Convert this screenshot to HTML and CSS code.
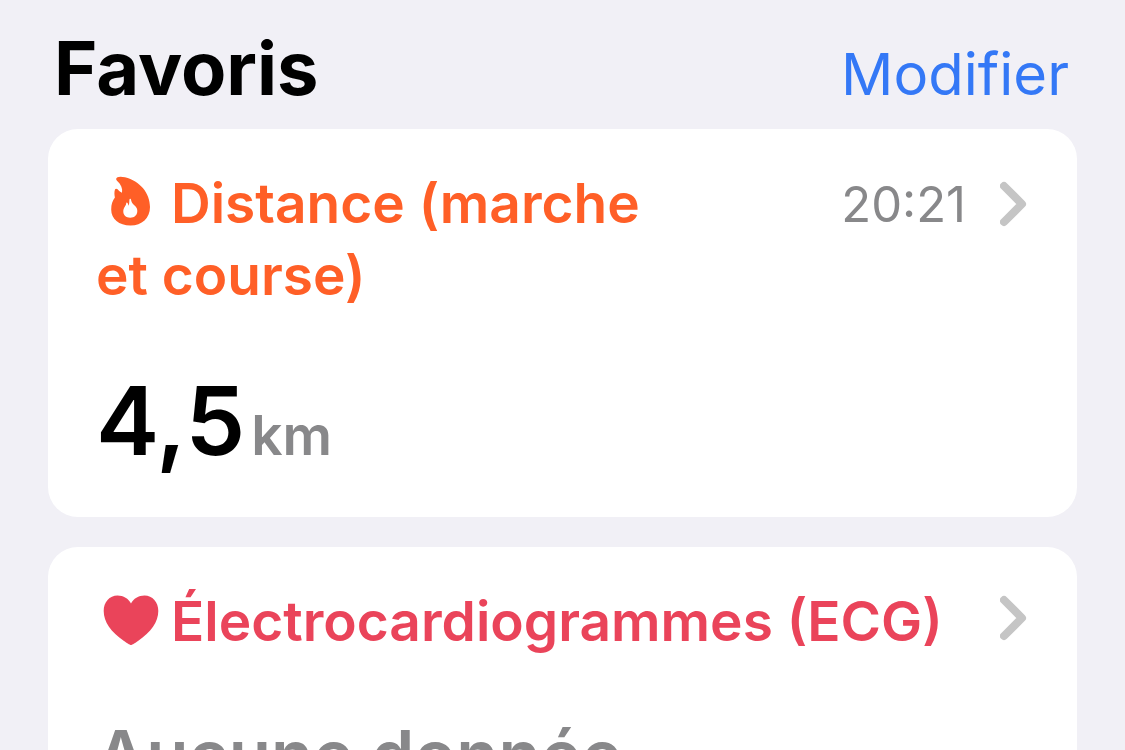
FILE: index.html
```html
<!DOCTYPE html>
<html lang="fr">
<head>
<meta charset="utf-8">
<meta name="viewport" content="width=device-width, initial-scale=1">
<title>Favoris</title>
<link rel="stylesheet" href="styles.css">
</head>
<body>
<main class="page">
  <header class="header">
    <h1 class="title">Favoris</h1>
    <button class="edit" type="button">Modifier</button>
  </header>
  <section class="card">
    <div class="card-head">
      <h2 class="card-title move"><svg class="icon" viewBox="0 0 66 56" aria-hidden="true"><path fill="currentColor" fill-rule="evenodd" d="M21.5 3.200C23 2.400 26 2.500 29 3.200C44 7 54 19 54 33C54 44 46 51.500 34.500 51.500C23 51.500 15.200 45 15.200 35.500C15.200 30 16.500 27 18.900 23.500C18.300 20.500 18.200 17.500 19 15.500C19.500 14.400 20.800 14.500 21.600 15.300C22.700 16.700 24.200 18 26 18.700C26.800 14.500 25 10.500 21 6.800C19.700 5.500 20 3.900 21.500 3.200ZM34.300 24.700C33.800 24.500 33.500 25 33.400 26C33.300 28.500 33.200 30.500 32.600 31.800C32.300 30.500 31.900 29.300 31.200 28.700C30.700 28.300 30.200 28.700 30.200 29.500C30 32 27.300 33.500 27.300 37.500C27.300 41 30 43.700 34.200 43.700C38.500 43.700 41.300 41 41.300 37C41.300 33.500 39.500 32.500 37.500 30.500C35.700 28.700 35.300 27 35 25.400C34.900 25 34.700 24.800 34.300 24.700Z"/></svg>Distance (marche et&nbsp;course)</h2>
      <a class="more" href="#distance" aria-label="Distance, 20:21"><span>20:21</span><svg class="chevron" viewBox="0 0 28 46" aria-hidden="true"><path d="M4 5L22 23L4 41"/></svg></a>
    </div>
    <p class="reading"><span class="value">4,5</span><span class="unit">km</span></p>
  </section>
  <section class="card">
    <div class="card-head">
      <h2 class="card-title heart"><svg class="icon" viewBox="0 0 66 56" aria-hidden="true"><path fill="currentColor" d="M35 53C34 53 30 50.500 28 49C15 40 7.700 30 7.700 19C7.700 10 13.500 3.500 21.500 3.500C27.500 3.500 32.500 6.500 35 11.500C37.500 6.500 42.500 3.500 48.500 3.500C56.500 3.500 62.300 10 62.300 19C62.300 30 55 40 42 49C40 50.500 36 53 35 53Z"/></svg>Électrocardiogrammes (ECG)</h2>
      <a class="more plain" href="#ecg" aria-label="Électrocardiogrammes"><svg class="chevron" viewBox="0 0 28 46" aria-hidden="true"><path d="M4 5L22 23L4 41"/></svg></a>
    </div>
    <p class="empty">Aucune donnée</p>
  </section>
</main>
</body>
</html>
```
FILE: styles.css
```css
* { box-sizing: border-box; }
body { margin: 0; height: 100vh; overflow: hidden; background: #f1f0f6; font-family: Inter, "Liberation Sans", sans-serif; }
h1, h2, p { margin: 0; }
.page { display: flex; flex-direction: column; gap: 30px; padding: 24px 48px 0; }
.header { display: flex; justify-content: space-between; align-items: baseline; padding: 0 8px 0 6px; height: 75px; }
.title { font-size: 74px; line-height: 88px; font-weight: 700; color: #000; }
.edit { border: 0; padding: 0; background: none; font: 400 58px/72px Inter, sans-serif; color: #3478f6; }
.card { flex: none; background: #fff; border-radius: 30px; padding: 38px 48px 40px; }
.card-head { display: flex; justify-content: space-between; align-items: flex-start; }
.card-title { font-size: 55px; line-height: 72px; font-weight: 600; max-width: 860px; }
.move { color: #ff5f27; max-width: 600px; }
.heart { color: #ea445a; white-space: nowrap; }
.icon { width: 66px; height: 56px; margin-right: 9px; vertical-align: -7px; }
.more { display: flex; align-items: center; gap: 34px; height: 74px; padding-right: 1px; color: #88888a; font-size: 49px; text-decoration: none; }
.plain { height: 66px; }
.chevron { width: 28px; height: 46px; fill: none; stroke: #c5c5c5; stroke-width: 8; stroke-linecap: round; stroke-linejoin: round; }
.reading { display: flex; align-items: baseline; gap: 6px; margin-top: 54px; }
.value { font-size: 95px; line-height: 112px; font-weight: 600; }
.unit { color: #88888a; font-size: 55px; font-weight: 600; }
.empty { margin-top: 56px; color: #88888a; font-size: 69px; line-height: 84px; font-weight: 600; }
```
